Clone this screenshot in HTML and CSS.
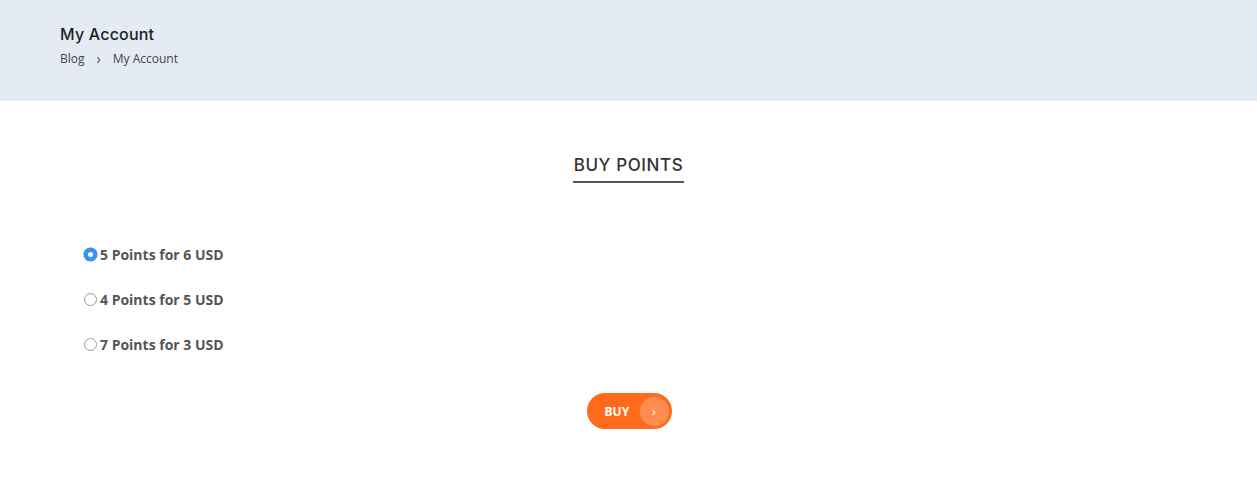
FILE: index.html
```html
<!DOCTYPE html>
<html>
<head>
<meta charset="utf-8">
<link rel="stylesheet" href="styles.css">
</head>
<body>
<header class="page-head">
  <h1 class="page-title">My Account</h1>
  <nav class="crumbs"><span>Blog</span><span class="sep">&#8250;</span><span>My Account</span></nav>
</header>
<main class="content">
  <div class="section-title"><h2>BUY POINTS</h2></div>
  <form class="options">
    <label class="opt"><input type="radio" name="p" checked><span>5 Points for 6 USD</span></label>
    <label class="opt"><input type="radio" name="p"><span>4 Points for 5 USD</span></label>
    <label class="opt"><input type="radio" name="p"><span>7 Points for 3 USD</span></label>
  </form>
  <div class="actions">
    <button class="buy" type="button"><span class="buy-label">BUY</span><span class="buy-arrow">&#8250;</span></button>
  </div>
</main>
</body>
</html>
```
FILE: styles.css
```css
* { box-sizing: border-box; }
html, body { margin: 0; padding: 0; background: #fff; }
body { font-family: "Open Sans", "Liberation Sans", sans-serif; color: #333; }
.page-head {
  background: #e4ebf4;
  height: 101px;
  padding: 24px 0 0 60px;
}
.page-title {
  margin: 0;
  font-family: Inter, "DejaVu Sans", sans-serif;
  font-weight: 500;
  font-size: 16px;
  line-height: 20px;
  color: #222;
  letter-spacing: 0.2px;
}
.crumbs {
  margin-top: 7px;
  font-size: 12px;
  line-height: 16px;
  color: #444;
  display: flex;
  gap: 12px;
}
.crumbs .sep { font-size: 14px; line-height: 15px; }
.content { padding-top: 53px; }
.section-title { display: flex; justify-content: center; }
.section-title h2 {
  margin: 0;
  font-family: Inter, "DejaVu Sans", sans-serif;
  font-weight: 500;
  font-size: 17px;
  line-height: 22px;
  color: #333;
  padding: 0 1px 5px;
  border-bottom: 2px solid #555;
  letter-spacing: 0.6px;
}
.options {
  margin: 62px 0 0 84px;
  display: flex;
  flex-direction: column;
  gap: 27px;
}
.opt {
  display: flex;
  align-items: center;
  height: 18px;
  font-weight: 700;
  font-size: 14px;
  color: #555;
}
.opt input {
  appearance: none;
  -webkit-appearance: none;
  margin: 0 3px 0 0;
  width: 13px;
  height: 13px;
  border-radius: 50%;
  border: 1px solid #9a9a9a;
  background: #fff;
}
.opt input:checked {
  border: 4px solid #3b93f7;
  background: #fff;
  box-shadow: 0 0 0 0.5px #2f86ea;
}
.actions { display: flex; justify-content: center; margin-top: 40px; padding-left: 1px; }
.buy {
  display: flex;
  align-items: center;
  width: 85px;
  height: 36px;
  border: 0;
  border-radius: 18px;
  background: #ff6b1a;
  padding: 0 3px 0 18px;
  font-family: "Open Sans", sans-serif;
  font-weight: 700;
  font-size: 12px;
  color: #fff;
}
.buy-label { flex: 1; text-align: left; }
.buy-arrow {
  width: 29px;
  height: 29px;
  border-radius: 50%;
  background: #ff8d52;
  display: flex;
  align-items: center;
  justify-content: center;
  font-size: 13px;
  font-weight: 400;
}
```
